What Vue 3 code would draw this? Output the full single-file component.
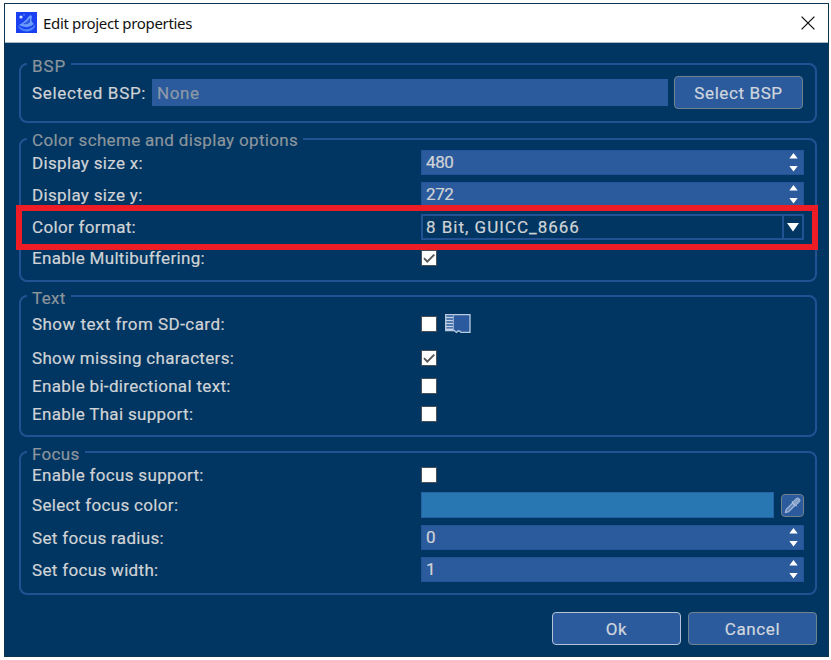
<script setup>
import { ref } from 'vue'

const displayRows = ref([
  { label: 'Display size x:', kind: 'spin', value: '480', cls: 'h25' },
  { label: 'Display size y:', kind: 'spin', value: '272', cls: 'h25 mt7' },
  { label: 'Color format:', kind: 'combo', value: '8 Bit, GUICC_8666', cls: 'h26 mt7' },
  { label: 'Enable Multibuffering:', kind: 'check', value: true, cls: 'h16 mt8' },
])
const textRows = ref([
  { label: 'Show text from SD-card:', kind: 'check', value: false, card: true, cls: 'h16 wide' },
  { label: 'Show missing characters:', kind: 'check', value: true, cls: 'h16 mt18' },
  { label: 'Enable bi-directional text:', kind: 'check', value: false, cls: 'h16 mt12' },
  { label: 'Enable Thai support:', kind: 'check', value: false, cls: 'h16 mt12' },
])
const focusRows = ref([
  { label: 'Enable focus support:', kind: 'check', value: false, cls: 'h16' },
  { label: 'Select focus color:', kind: 'color', cls: 'h26 mt9' },
  { label: 'Set focus radius:', kind: 'spin', value: '0', cls: 'h25 mt7' },
  { label: 'Set focus width:', kind: 'spin', value: '1', cls: 'h25 mt7' },
])
const groups = [
  { title: 'Color scheme and display options', cls: 'g-display', rows: displayRows },
  { title: 'Text', cls: 'g-text', rows: textRows },
  { title: 'Focus', cls: 'g-focus', rows: focusRows },
]
</script>

<template>
  <div class="stage">
    <div class="dialog">
      <header class="titlebar">
        <svg class="appicon" width="21" height="21" viewBox="0 0 21 21">
          <rect width="21" height="21" fill="#1a40f2" />
          <path d="M3 13Q9 10 13 4Q16 2 16 5Q14 9 18 12Q13 17 5 14Z" fill="#6a9cff" />
          <path d="M1.500 13Q6 18 12 17Q17 16 19.500 12Q19 18 12 19.500Q4 20 1.500 13Z" fill="#4b86fa" />
          <path d="M7 12Q11 10 14 6L14 10Q12 13 7 12Z" fill="#2b58e0" />
          <circle cx="5" cy="5" r="1.600" fill="#d5e6ff" />
          <circle cx="8" cy="3" r=".7" fill="#7fabff" />
        </svg>
        <span class="title">Edit project properties</span>
        <svg class="close" width="14" height="14" viewBox="0 0 14 14">
          <path d="M.6.6 13.400 13.400M13.400.6.6 13.400" stroke="#111" stroke-width="1.300" fill="none" />
        </svg>
      </header>

      <main class="body">
        <section class="group g-bsp">
          <span class="legend">BSP</span>
          <div class="bsp-row">
            <span class="label">Selected BSP:</span>
            <span class="bsp-field">None</span>
            <button class="btn">Select BSP</button>
          </div>
        </section>

        <section v-for="g in groups" :key="g.title" class="group" :class="g.cls">
          <span class="legend">{{ g.title }}</span>
          <div v-for="r in g.rows.value" :key="r.label" class="row" :class="r.cls">
            <span class="label">{{ r.label }}</span>
            <div v-if="r.kind === 'spin'" class="field spin">
              <span class="num">{{ r.value }}</span>
              <svg class="arrows" width="9" height="19" viewBox="0 0 9 19">
                <path d="M4.500 0 8.700 5.600H.3ZM.3 13H8.700L4.500 18.600Z" fill="#fff" />
              </svg>
            </div>
            <div v-else-if="r.kind === 'combo'" class="field combo">
              <span>{{ r.value }}</span>
              <span class="drop">
                <svg width="12" height="9" viewBox="0 0 12 9"><path d="M0 0H12L6 8.500Z" fill="#fff" /></svg>
              </span>
            </div>
            <div v-else-if="r.kind === 'color'" class="color">
              <span class="swatch"></span>
              <button class="picker">
                <svg width="17" height="17" viewBox="0 0 17 17">
                  <path d="M1.500 15.500 2.200 12.500 8.500 6.200 10.800 8.500 4.500 14.800Z" fill="#5d83bb" stroke="#a9bdd8" stroke-width="1.200" />
                  <path d="M7.800 4.800 9.300 4.600 12 1.600Q13.500.3 15.300 1.700Q16.700 3.500 15.400 5L12.400 7.700 12.200 9.200Z" fill="#86a3cc" stroke="#a9bdd8" stroke-width="1" />
                </svg>
              </button>
            </div>
            <div v-else class="checks">
              <span class="box">
                <svg v-if="r.value" width="14" height="14" viewBox="0 0 14 14">
                  <path d="M2 7.200 5.300 10.700 12.300 3.600" stroke="#555" stroke-width="1.900" fill="none" />
                </svg>
              </span>
              <svg v-if="r.card" class="card" width="26" height="20" viewBox="0 0 26 20">
                <path d="M.7.7H25V18.400H16L14.500 17H13L11.500 18.400 9 16.500H.7Z" fill="#2b5b9e" stroke="#b9cbe0" stroke-width="1.300" />
                <path d="M1 3.500H8M1 6.500H8M1 9.500H8M1 12.500H8M1 15.300H8" stroke="#c3d2e5" stroke-width="1.700" />
                <path d="M8.500 1V16" stroke="#8ca9cf" stroke-width="1" />
              </svg>
            </div>
          </div>
        </section>

        <footer class="actions">
          <button class="btn default">Ok</button>
          <button class="btn">Cancel</button>
        </footer>
        <div class="highlight"></div>
      </main>
    </div>
  </div>
</template>

<style>
body { background: #fff; overflow: hidden; }
</style>
<style scoped>
* { box-sizing: border-box; }
.stage { width: 831px; height: 660px; padding: 3px 2px 3px 4px; }
.dialog {
  width: 825px; height: 654px; display: flex; flex-direction: column; position: relative;
  border: 1px solid #0d3552; background: #003661;
  font: 17px/20px Roboto, "Liberation Sans", sans-serif; letter-spacing: .33px; color: #d0d3d6;
  -webkit-text-stroke: .2px;
}
.titlebar {
  height: 39px; flex: none; background: #fff; display: flex; align-items: center;
  padding: 0 13px 1px 11px; border-bottom: 1px solid #a9bac6;
}
.title { margin-left: 6px; font: 15px/20px "Noto Sans", sans-serif; letter-spacing: -.34px; color: #111; -webkit-text-stroke: 0; }
.close { margin-left: auto; }
.body { flex: 1; padding: 20px 11px 0 14px; display: flex; flex-direction: column; }
.group { border: 2px solid #225293; border-radius: 8px; position: relative; flex: none; padding-left: 11px; }
.legend {
  position: absolute; left: 6px; top: -9px; padding: 0 5px; background: #003661;
  color: #8b959d; white-space: nowrap;
}
.g-bsp { height: 60px; padding-top: 11px; }
.g-bsp .legend { letter-spacing: .9px; }
.g-display { height: 144px; margin-top: 15px; padding-top: 10px; }
.g-display .legend { top: -10px; }
.g-text { height: 142px; margin-top: 13px; padding-top: 17px; }
.g-focus { height: 144px; margin-top: 14px; padding-top: 12px; }
.bsp-row { display: flex; height: 33px; align-items: center; }
.bsp-row .label { width: 120px; letter-spacing: .7px; }
.bsp-field { width: 516px; height: 27px; padding-left: 5px; line-height: 28px; background: #2b5b9d; color: #8d9aa7; margin-right: 6px; letter-spacing: .6px; }
.btn {
  width: 129px; height: 33px; padding: 0; border: 1.500px solid #6f8290; border-radius: 4px;
  background: #2b5b9d; color: #d0d6de; font: inherit; letter-spacing: .6px; -webkit-text-stroke: .2px;
}
.row { display: grid; grid-template-columns: 389px 383px; align-items: center; }
.label { white-space: nowrap; }
.wide .label { letter-spacing: .45px; }
.h16 { height: 16px; } .h25 { height: 25px; } .h26 { height: 26px; }
.mt7 { margin-top: 7px; } .mt8 { margin-top: 8px; } .mt9 { margin-top: 11px; }
.mt12 { margin-top: 12px; } .mt18 { margin-top: 18px; }
.field { height: 100%; display: flex; align-items: center; justify-content: space-between; padding-left: 4px; border: 1px solid #23549a; }
.spin { background: #2b5b9d; padding-right: 5px; }
.num { letter-spacing: -.4px; padding-bottom: 2px; }
.combo { border: 2px solid #225293; padding-left: 3px; letter-spacing: 1px; }
.drop { width: 20px; height: 100%; border-left: 2px solid #225293; display: flex; align-items: center; justify-content: center; }
.color { height: 100%; display: flex; align-items: center; gap: 7px; }
.swatch { width: 353px; height: 26px; background: #2876b2; border: 1px solid #2462a5; }
.picker { width: 23px; height: 23px; padding: 0; border: 1.500px solid #6f8290; border-radius: 4px; background: #2b5b9d; display: flex; align-items: center; justify-content: center; }
.checks { display: flex; align-items: center; height: 16px; }
.box { width: 16px; height: 16px; border: 1px solid #4a5055; background: #fff; display: flex; }
.card { margin-left: 8px; }
.actions { margin-top: 17px; display: flex; justify-content: flex-end; gap: 7px; }
.default { border-color: #b4c4d6; }
.highlight { position: absolute; left: 11px; top: 201px; width: 802px; height: 45px; border: 6.500px solid #ee1c24; }
</style>
